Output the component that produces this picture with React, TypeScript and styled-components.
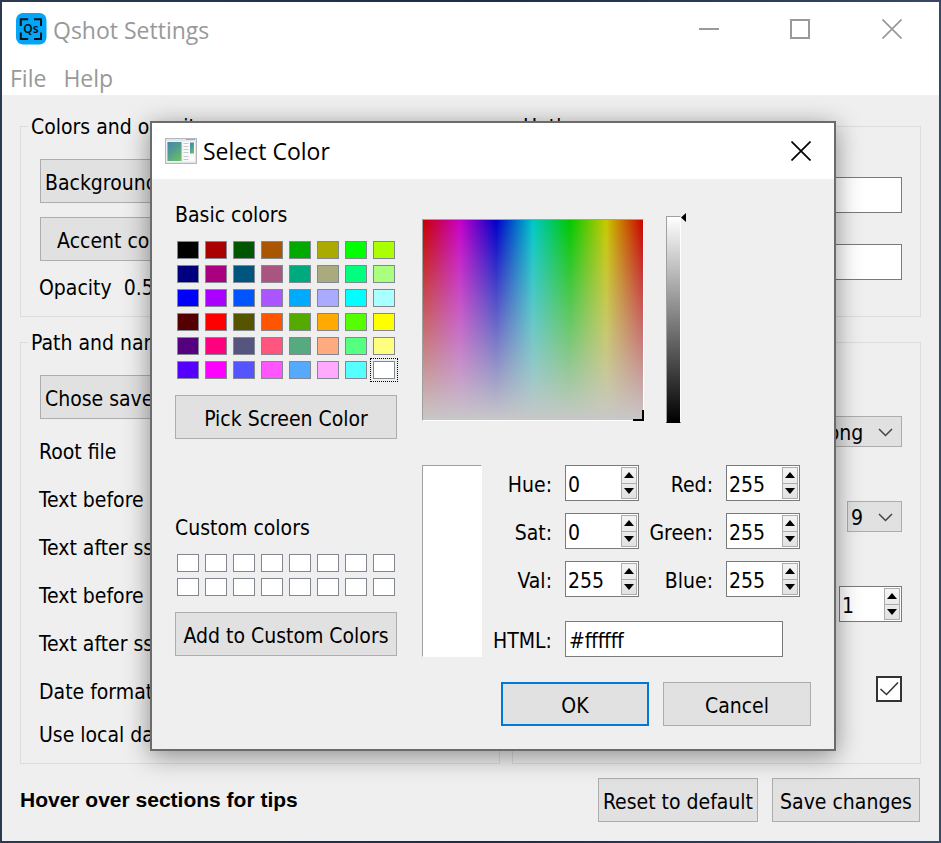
import React, { useState } from "react";
import styled, { createGlobalStyle, css } from "styled-components";

const uiFont = `"DejaVu Sans Condensed", "DejaVu Sans", sans-serif`;
const titleFont = `"Open Sans", "Noto Sans", sans-serif`;

const GlobalStyle = createGlobalStyle`
  *, *::before, *::after { box-sizing: border-box; }
  html, body, #root { height: 100%; }
  body { margin: 0; background: #2c3a52; }
  button, input, select { font: inherit; color: inherit; margin: 0; border-radius: 0; outline: none; }
`;

const Desktop = styled.div`
  position: relative;
  min-height: 100%;
  display: flex;
  padding: 2px;
  background: linear-gradient(90deg, #2c3a50, #1d2c48 50%, #36476a);
  font: 21px/24px ${uiFont};
  color: #000;
  overflow: hidden;
`;

const Window = styled.div`
  flex: 1;
  min-width: 0;
  display: flex;
  flex-direction: column;
  background: #efefef;
`;

const TitleBar = styled.header`
  display: flex;
  align-items: center;
  height: 54px;
  padding-left: 14px;
  background: #fff;
  color: #999;
`;

const Title = styled.h1<{ $drop?: number }>`
  flex: 1;
  margin: 0 0 0 6px;
  padding-top: ${(p) => p.$drop ?? 0}px;
  font: 400 23px/30px ${titleFont};
  white-space: nowrap;
`;

const CaptionButton = styled.button<{ $width: number }>`
  display: grid;
  place-items: center;
  width: ${(p) => p.$width}px;
  height: 100%;
  padding: 0;
  border: 0;
  background: none;
`;

const MenuBar = styled.nav`
  display: flex;
  gap: 17px;
  height: 39px;
  padding: 4px 8px 0;
  background: #fff;
`;

const MenuItem = styled.button`
  padding: 0;
  border: 0;
  background: none;
  color: #999;
  font: 23px/30px ${titleFont};
`;

const Groups = styled.main`
  display: grid;
  grid-template-columns: 480fr 409fr;
  gap: 12px;
  padding: 18px 18px 14px;
`;

const GroupBox = styled.fieldset<{ $top: number }>`
  min-width: 0;
  margin: 0;
  padding: ${(p) => p.$top}px 18px 16px;
  border: 1px solid #dcdcdc;
`;

const Legend = styled.legend`
  margin-left: -11px;
  padding: 2px 3px 0;
  white-space: nowrap;
`;

const Stack = styled.div<{ $gap: number; $end?: boolean }>`
  display: flex;
  flex-direction: column;
  align-items: ${(p) => (p.$end ? "flex-end" : "stretch")};
  gap: ${(p) => p.$gap}px;
`;

const ButtonColumn = styled.div`
  display: inline-grid;
  gap: 14px;
  margin: 0 0 14px 1px;
`;

const PushButton = styled.button<{ $primary?: boolean; $min?: number }>`
  min-width: ${(p) => p.$min ?? 0}px;
  height: 44px;
  padding: 4px 4px 0;
  border: 1px solid #adadad;
  background: #e1e1e1;
  white-space: nowrap;
  ${(p) =>
    p.$primary &&
    css`
      border: 2px solid #0078d7;
    `}
`;

const Line = styled.div<{ $height: number }>`
  height: ${(p) => p.$height}px;
  padding-top: 1px;
  line-height: ${(p) => p.$height}px;
  white-space: pre;
`;

const TextBox = styled.input`
  width: 100%;
  height: 36px;
  padding: 4px 3px 0;
  border: 1px solid #7a7a7a;
  background: #fff;
`;

const ComboFrame = styled.span`
  position: relative;
  display: inline-flex;
`;

const ComboSelect = styled.select`
  appearance: none;
  height: 31px;
  padding: 2px 37px 0 3px;
  border: 1px solid #adadad;
  background: #e1e1e1;
`;

const ComboArrow = styled.svg`
  position: absolute;
  right: 9px;
  top: 12px;
  pointer-events: none;
`;

const SpinFrame = styled.span<{ $width: number }>`
  display: inline-flex;
  width: ${(p) => p.$width}px;
  height: 36px;
  padding: 1px;
  border: 1px solid #7a7a7a;
  background: #fff;
`;

const SpinInput = styled.input`
  appearance: textfield;
  flex: 1;
  min-width: 0;
  padding: 4px 0 0 1px;
  border: 0;
  background: none;
  &::-webkit-inner-spin-button { display: none; }
`;

const SpinButtons = styled.span`
  display: grid;
  width: 16px;
  border: 1px solid #adadad;
  background: linear-gradient(#f4f4f4, #e2e2e2);
`;

const SpinButton = styled.button`
  display: grid;
  place-items: center;
  padding: 0;
  border: 0;
  background: none;
  & + & { border-top: 1px solid #adadad; }
`;

const CheckFrame = styled.span`
  position: relative;
  display: inline-flex;
`;

const CheckInput = styled.input`
  appearance: none;
  width: 26px;
  height: 26px;
  border: 2px solid #333;
  background: #fff;
  & + svg { visibility: hidden; }
  &:checked + svg { visibility: visible; }
`;

const CheckMark = styled.svg`
  position: absolute;
  inset: 0;
  pointer-events: none;
`;

const Footer = styled.footer`
  display: flex;
  align-items: center;
  gap: 14px;
  padding: 0 19px 19px 18px;
`;

const Tip = styled.strong`
  flex: 1;
  font: 700 21px/24px "Liberation Sans", Arial, sans-serif;
`;

const Dialog = styled.section`
  position: absolute;
  left: 150px;
  top: 121px;
  border: 2px solid #6b6b6b;
  background: #efefef;
  box-shadow: 0 5px 24px rgba(0, 0, 0, 0.42);
`;

const DialogTitleBar = styled(TitleBar)`
  height: 56px;
  padding-left: 13px;
  color: #000;
`;

const DialogBody = styled.div`
  display: grid;
  grid-template-columns: 222px auto;
  column-gap: 25px;
  padding: 24px 23px 23px;
`;

const PaletteColumn = styled.div`
  display: flex;
  flex-direction: column;
`;

const Caption = styled.h2`
  margin: 0;
  font: inherit;
`;

const Palette = styled.div`
  display: grid;
  grid-template-columns: repeat(8, 22px);
  gap: 6px;
  margin: 14px 2px 16px;
`;

const Swatch = styled.button<{ $color: string; $selected?: boolean }>`
  height: 18px;
  padding: 0;
  border: 1px solid #828790;
  background: ${(p) => p.$color};
  ${(p) =>
    p.$selected &&
    css`
      outline: 1px dotted #000;
      outline-offset: 2px;
    `}
`;

const CustomSection = styled.div`
  display: flex;
  flex-direction: column;
  margin-top: 77px;
`;

const FieldRow = styled.div`
  display: flex;
  align-items: flex-start;
  padding-top: 13px;
`;

const HueField = styled.div`
  position: relative;
  width: 222px;
  height: 202px;
  margin: 3px 22px 0 0;
  border: 1px solid;
  border-color: #a0a0a0 #fff #fff #a0a0a0;
  background:
    linear-gradient(rgba(200, 200, 200, 0), rgb(200, 200, 200)),
    linear-gradient(90deg, #c80000, #c800c8, #0000c8, #00c8c8, #00c800, #c8c800, #c80000);
`;

const HueMarker = styled.span`
  position: absolute;
  right: -1px;
  bottom: -1px;
  width: 11px;
  height: 11px;
  border: solid #000;
  border-width: 0 2px 2px 0;
`;

const ValueSlider = styled.input`
  appearance: none;
  writing-mode: vertical-lr;
  direction: rtl;
  width: 15px;
  height: 207px;
  padding: 0;
  border: 1px solid;
  border-color: #a0a0a0 #fff #000 #a0a0a0;
  background: linear-gradient(#fff, #000);
  &::-webkit-slider-thumb { appearance: none; width: 13px; height: 1px; background: transparent; }
`;

const SliderArrow = styled.svg`
  margin-top: -3px;
`;

const ValueGrid = styled.div`
  display: grid;
  grid-template-columns: 60px 70px 87px 74px 87px;
  grid-template-rows: 36px 36px 36px 48px;
  row-gap: 12px;
  margin-top: 42px;
  padding-right: 11px;
`;

const Preview = styled.div`
  grid-row: 1 / -1;
  border: 1px solid;
  border-color: #a0a0a0 #fff #fff #a0a0a0;
  background: #fff;
`;

const FieldLabel = styled.label`
  align-self: end;
  line-height: 36px;
  padding-top: 2px;
  height: 36px;
  text-align: right;
`;

const FieldCell = styled.div<{ $wide?: boolean }>`
  align-self: end;
  display: flex;
  padding-left: 13px;
  ${(p) =>
    p.$wide &&
    css`
      grid-column: span 3;
      padding-right: 17px;
    `}
`;

const DialogButtons = styled.div`
  display: flex;
  justify-content: flex-end;
  gap: 14px;
  margin-top: 25px;
`;

const basicColors = [
  "#000000", "#aa0000", "#005500", "#aa5500", "#00aa00", "#aaaa00", "#00ff00", "#aaff00",
  "#00007f", "#aa007f", "#00557f", "#aa557f", "#00aa7f", "#aaaa7f", "#00ff7f", "#aaff7f",
  "#0000ff", "#aa00ff", "#0055ff", "#aa55ff", "#00aaff", "#aaaaff", "#00ffff", "#aaffff",
  "#550000", "#ff0000", "#555500", "#ff5500", "#55aa00", "#ffaa00", "#55ff00", "#ffff00",
  "#55007f", "#ff007f", "#55557f", "#ff557f", "#55aa7f", "#ffaa7f", "#55ff7f", "#ffff7f",
  "#5500ff", "#ff00ff", "#5555ff", "#ff55ff", "#55aaff", "#ffaaff", "#55ffff", "#ffffff",
];

const channels: [string, number][] = [
  ["Hue", 0], ["Red", 255],
  ["Sat", 0], ["Green", 255],
  ["Val", 255], ["Blue", 255],
];

function AppIcon() {
  return (
    <svg width="31" height="32" viewBox="0 0 31 32" aria-hidden="true">
      <rect x="0" y="0" width="30.500" height="31.500" rx="7" fill="#03a5f7" />
      <path d="M4.800 13V6.300H12.200M18 6.300H25V13M25 19.500V26H18M12.200 26H4.800V19.500" fill="none" stroke="#06121c" strokeWidth="2" />
      <text x="15" y="20" textAnchor="middle" fontFamily="Noto Sans, sans-serif" fontWeight="600" fontSize="12" fill="#06121c">Qs</text>
    </svg>
  );
}

function DialogIcon() {
  return (
    <svg width="32" height="26" viewBox="0 0 32 26" aria-hidden="true">
      <defs>
        <linearGradient id="pane" x1="0" y1="0" x2="0.600" y2="1">
          <stop offset="0" stopColor="#4b83ae" />
          <stop offset="0.500" stopColor="#4f9c92" />
          <stop offset="1" stopColor="#6abb68" />
        </linearGradient>
      </defs>
      <rect x="0.500" y="0.500" width="31" height="25" fill="#e3e6e9" stroke="#b4b8bc" />
      <path d="M21 1.500H30" stroke="#a5abb0" />
      <rect x="2" y="3.500" width="15" height="20" fill="url(#pane)" stroke="#fff" strokeWidth="0.800" />
      <rect x="18" y="3.500" width="12" height="20" fill="#fafafa" />
      <rect x="25" y="4.500" width="4" height="11" fill="url(#pane)" />
      <path d="M18.500 5.500H23.500M18.500 8.500H23.500M18.500 11.500H23.500M18.500 14.500H23.500M18.500 18.500H23.500M18.500 21.500H23.500" stroke="#c5c8cb" />
    </svg>
  );
}

function Cross() {
  return (
    <svg width="20" height="20" viewBox="0 0 20 20" aria-hidden="true">
      <path d="M0.500 0.500L19.500 19.500M19.500 0.500L0.500 19.500" stroke="currentColor" strokeWidth="1.700" />
    </svg>
  );
}

function Spin({ id, label, initial, width, max }: { id: string; label?: string; initial: number; width: number; max: number }) {
  const [value, setValue] = useState(initial);
  const step = (d: number) => setValue((v) => Math.min(max, Math.max(0, v + d)));
  return (
    <SpinFrame $width={width}>
      <SpinInput id={id} aria-label={label} type="number" value={value} onChange={(e) => setValue(Number(e.target.value))} />
      <SpinButtons>
        <SpinButton type="button" aria-label="Increase" onClick={() => step(1)}>
          <svg width="10" height="6"><path d="M0 6L5 0L10 6Z" /></svg>
        </SpinButton>
        <SpinButton type="button" aria-label="Decrease" onClick={() => step(-1)}>
          <svg width="10" height="6"><path d="M0 0L5 6L10 0Z" /></svg>
        </SpinButton>
      </SpinButtons>
    </SpinFrame>
  );
}

function Combo({ label, value }: { label: string; value: string }) {
  return (
    <ComboFrame>
      <ComboSelect aria-label={label} defaultValue={value}>
        <option>{value}</option>
      </ComboSelect>
      <ComboArrow width="15" height="9" viewBox="0 0 15 9">
        <path d="M1 1L7.500 7.500L14 1" fill="none" stroke="#444" strokeWidth="1.500" />
      </ComboArrow>
    </ComboFrame>
  );
}

function SelectColorDialog() {
  const [selected, setSelected] = useState(basicColors.length - 1);
  const [html, setHtml] = useState("#ffffff");
  return (
    <Dialog role="dialog" aria-label="Select Color">
      <DialogTitleBar>
        <DialogIcon />
        <Title as="h2">Select Color</Title>
        <CaptionButton $width={66} aria-label="Close dialog"><Cross /></CaptionButton>
      </DialogTitleBar>
      <DialogBody>
        <PaletteColumn>
          <Caption>Basic colors</Caption>
          <Palette>
            {basicColors.map((c, i) => (
              <Swatch key={c} $color={c} $selected={i === selected} aria-label={c} onClick={() => setSelected(i)} />
            ))}
          </Palette>
          <PushButton>Pick Screen Color</PushButton>
          <CustomSection>
            <Caption>Custom colors</Caption>
            <Palette>
              {Array.from({ length: 16 }, (_, i) => (
                <Swatch key={i} $color="#ffffff" aria-label={`Custom color ${i + 1}`} />
              ))}
            </Palette>
            <PushButton>Add to Custom Colors</PushButton>
          </CustomSection>
        </PaletteColumn>
        <div>
          <FieldRow>
            <HueField><HueMarker /></HueField>
            <ValueSlider type="range" min={0} max={255} defaultValue={255} aria-label="Value" />
            <SliderArrow width="5" height="9" viewBox="0 0 5 9"><path d="M5 0V9L0 4.500Z" /></SliderArrow>
          </FieldRow>
          <ValueGrid>
            <Preview />
            {channels.map(([name, value]) => (
              <React.Fragment key={name}>
                <FieldLabel htmlFor={name}>{name}:</FieldLabel>
                <FieldCell><Spin id={name} initial={value} width={74} max={name === "Hue" ? 359 : 255} /></FieldCell>
              </React.Fragment>
            ))}
            <FieldLabel htmlFor="html">HTML:</FieldLabel>
            <FieldCell $wide><TextBox id="html" value={html} onChange={(e) => setHtml(e.target.value)} /></FieldCell>
          </ValueGrid>
          <DialogButtons>
            <PushButton $min={148} $primary>OK</PushButton>
            <PushButton $min={148}>Cancel</PushButton>
          </DialogButtons>
        </div>
      </DialogBody>
    </Dialog>
  );
}

export default function App() {
  return (
    <Desktop>
      <GlobalStyle />
      <Window>
        <TitleBar>
          <AppIcon />
          <Title $drop={2}>Qshot Settings</Title>
          <CaptionButton $width={92} aria-label="Minimize">
            <svg width="20" height="20"><path d="M0 10H20" stroke="currentColor" strokeWidth="2" /></svg>
          </CaptionButton>
          <CaptionButton $width={90} aria-label="Maximize">
            <svg width="20" height="20"><rect x="1" y="1" width="18" height="18" fill="none" stroke="currentColor" strokeWidth="2" /></svg>
          </CaptionButton>
          <CaptionButton $width={94} aria-label="Close"><Cross /></CaptionButton>
        </TitleBar>
        <MenuBar>
          <MenuItem>File</MenuItem>
          <MenuItem>Help</MenuItem>
        </MenuBar>
        <Groups>
          <GroupBox $top={20}>
            <Legend>Colors and opacity</Legend>
            <ButtonColumn>
              <PushButton>Background fill</PushButton>
              <PushButton>Accent color</PushButton>
            </ButtonColumn>
            <Line $height={25}>Opacity  0.5</Line>
          </GroupBox>
          <GroupBox $top={38}>
            <Legend>Hotkeys</Legend>
            <Stack $gap={31}>
              <TextBox aria-label="First hotkey" />
              <TextBox aria-label="Second hotkey" />
            </Stack>
          </GroupBox>
          <GroupBox $top={20}>
            <Legend>Path and name</Legend>
            <ButtonColumn>
              <PushButton>Chose save path</PushButton>
            </ButtonColumn>
            <Stack $gap={12}>
              <Line $height={36}>Root file</Line>
              <Line $height={36}>Text before</Line>
              <Line $height={36}>Text after ss</Line>
              <Line $height={36}>Text before</Line>
              <Line $height={36}>Text after ss</Line>
              <Line $height={36}>Date format</Line>
              <Line $height={26}>Use local date</Line>
            </Stack>
          </GroupBox>
          <GroupBox $top={61}>
            <Legend>Options</Legend>
            <Stack $gap={54} $end>
              <Combo label="Strength" value="Strong" />
              <Combo label="Level" value="9" />
              <Spin id="count" label="Count" initial={1} width={63} max={99} />
              <CheckFrame>
                <CheckInput type="checkbox" defaultChecked aria-label="Enabled" />
                <CheckMark width="26" height="26" viewBox="0 0 26 26">
                  <path d="M4.500 13L10.500 18.500L22 6.500" fill="none" stroke="#333" strokeWidth="1.600" />
                </CheckMark>
              </CheckFrame>
            </Stack>
          </GroupBox>
        </Groups>
        <Footer>
          <Tip>Hover over sections for tips</Tip>
          <PushButton>Reset to default</PushButton>
          <PushButton $min={148}>Save changes</PushButton>
        </Footer>
      </Window>
      <SelectColorDialog />
    </Desktop>
  );
}
